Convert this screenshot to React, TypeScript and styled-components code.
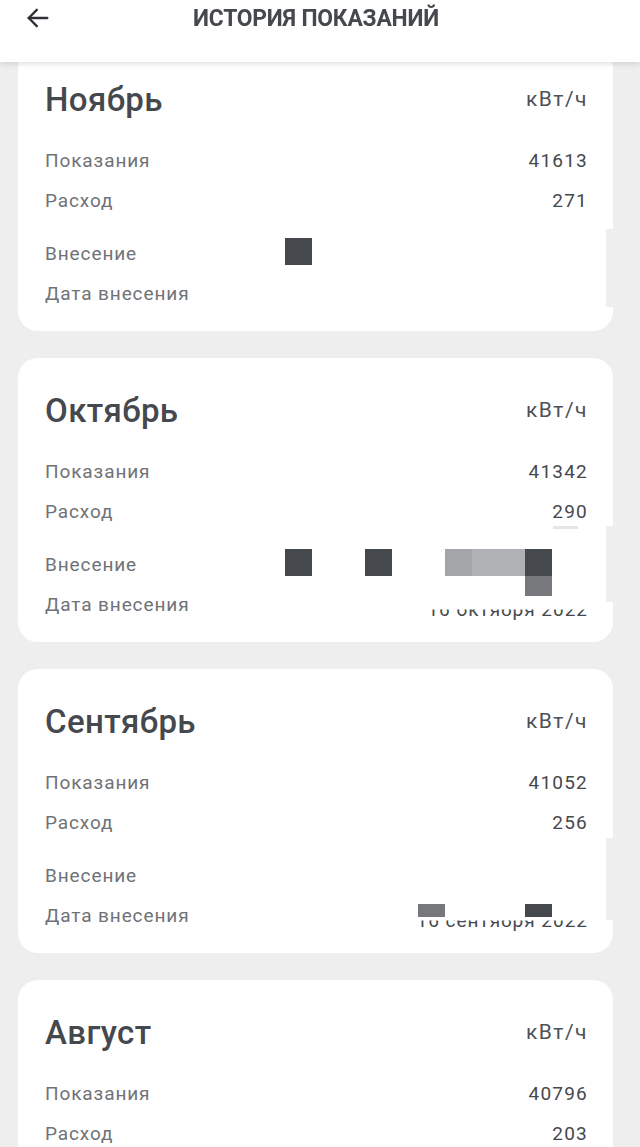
import React from "react";
import styled, { createGlobalStyle } from "styled-components";

const Global = createGlobalStyle`
  html, body { margin: 0; padding: 0; background: #eeeeee; }
  body { font-family: Roboto, "Noto Sans", sans-serif; -webkit-font-smoothing: antialiased; }
`;

const Header = styled.header`
  position: fixed;
  top: 0; left: 0; right: 0;
  height: 62px;
  background: #ffffff;
  box-shadow: 0 2px 5px rgba(0,0,0,0.12);
  z-index: 10;
`;

const HeaderInner = styled.div`
  display: grid;
  grid-template-columns: 60px 1fr 60px;
  align-items: start;
  height: 100%;
`;

const BackButton = styled.button`
  border: 0;
  background: transparent;
  padding: 0;
  margin: 4px 0 0 22px;
  width: 32px;
  height: 28px;
  display: flex;
  align-items: center;
  justify-content: center;
  color: #2e3035;
`;

const Title = styled.h1`
  margin: 3px 0 0;
  text-align: center;
  font-size: 24px;
  line-height: 30px;
  font-weight: 700;
  color: #45484d;
  letter-spacing: -0.2px;
  transform: translateX(-4px) scaleX(0.95);
`;

const List = styled.main`
  display: flex;
  flex-direction: column;
  gap: 27px;
  padding: 47px 27px 40px 18px;
`;

const Card = styled.section`
  position: relative;
  background: #ffffff;
  border-radius: 20px;
  padding: 24px 26px 18px 27px;
`;

const Notch = styled.span<{ $top: number; $h: number }>`
  position: absolute;
  right: 0;
  top: ${(p) => p.$top}px;
  width: 7px;
  height: ${(p) => p.$h}px;
  background: #eeeeee;
`;

const CardHead = styled.div`
  display: flex;
  justify-content: space-between;
  align-items: center;
  height: 56px;
  margin-bottom: 13px;
`;

const Month = styled.h2`
  margin: 0;
  font-size: 33px;
  font-weight: 500;
  color: #45484d;
  letter-spacing: 0.4px;
`;

const Unit = styled.span`
  font-size: 21px;
  color: #4e5156;
  letter-spacing: 1.5px;
  margin-right: -1px;
`;

const Group = styled.div<{ $gap?: number }>`
  display: flex;
  flex-direction: column;
  margin-top: ${(p) => p.$gap ?? 0}px;
`;

const Row = styled.div`
  position: relative;
  display: flex;
  justify-content: space-between;
  align-items: center;
  height: 40px;
  font-size: 19px;
  letter-spacing: 0.9px;
`;

const Label = styled.span`
  color: #6f7276;
`;

const Value = styled.span`
  color: #45484d;
  letter-spacing: 1.2px;
  margin-right: -1px;
`;

const ClippedValue = styled(Value)`
  clip-path: inset(52% 0 0 0);
  transform: translateY(5px);
  letter-spacing: 1px;
`;

const Pixel = styled.span<{ $x: number; $y: number; $w: number; $h: number; $c: string }>`
  position: absolute;
  left: ${(p) => p.$x}px;
  top: ${(p) => p.$y}px;
  width: ${(p) => p.$w}px;
  height: ${(p) => p.$h}px;
  background: ${(p) => p.$c};
`;

type Px = { x: number; y: number; w: number; h: number; c: string };

type Item = {
  month: string;
  reading: string;
  usage: string;
  date?: string;
  notch?: [number, number];
  pixels?: Px[];
  usagePixels?: Px[];
  datePixels?: Px[];
};

const items: Item[] = [
  {
    month: "Ноябрь",
    reading: "41613",
    usage: "271",
    notch: [182, 78],
    pixels: [{ x: 240, y: 5, w: 27, h: 27, c: "#45484d" }],
  },
  {
    month: "Октябрь",
    reading: "41342",
    usage: "290",
    date: "16 октября 2022",
    notch: [168, 76],
    usagePixels: [{ x: 508, y: 35, w: 25, h: 3, c: "#e4e5e7" }],
    pixels: [
      { x: 240, y: 5, w: 27, h: 27, c: "#45484d" },
      { x: 320, y: 5, w: 27, h: 27, c: "#45484d" },
      { x: 400, y: 5, w: 27, h: 27, c: "#a4a5a8" },
      { x: 427, y: 5, w: 53, h: 27, c: "#b0b1b4" },
      { x: 480, y: 5, w: 27, h: 27, c: "#45484d" },
      { x: 480, y: 32, w: 27, h: 20, c: "#76787c" },
    ],
  },
  {
    month: "Сентябрь",
    reading: "41052",
    usage: "256",
    date: "16 сентября 2022",
    notch: [169, 82],
    datePixels: [
      { x: 373, y: 9, w: 27, h: 13, c: "#76787c" },
      { x: 480, y: 9, w: 27, h: 13, c: "#45484d" },
    ],
  },
  {
    month: "Август",
    reading: "40796",
    usage: "203",
  },
];

function ArrowLeft() {
  return (
    <svg width="28" height="28" viewBox="0 0 24 24" fill="none" stroke="currentColor" strokeWidth="2" strokeLinecap="round" strokeLinejoin="round">
      <path d="M20 12H4" />
      <path d="M11 5l-7 7 7 7" />
    </svg>
  );
}

export default function App() {
  return (
    <>
      <Global />
      <Header>
        <HeaderInner>
          <BackButton aria-label="Назад">
            <ArrowLeft />
          </BackButton>
          <Title>ИСТОРИЯ ПОКАЗАНИЙ</Title>
          <span />
        </HeaderInner>
      </Header>
      <List>
        {items.map((it) => (
          <Card key={it.month}>
            {it.notch && <Notch $top={it.notch[0]} $h={it.notch[1]} />}
            <CardHead>
              <Month>{it.month}</Month>
              <Unit>кВт/ч</Unit>
            </CardHead>
            <Group>
              <Row>
                <Label>Показания</Label>
                <Value>{it.reading}</Value>
              </Row>
              <Row>
                <Label>Расход</Label>
                <Value>{it.usage}</Value>
                {it.usagePixels?.map((p, i) => (
                  <Pixel key={i} $x={p.x} $y={p.y} $w={p.w} $h={p.h} $c={p.c} />
                ))}
              </Row>
            </Group>
            <Group $gap={13}>
              <Row>
                <Label>Внесение</Label>
                {it.pixels?.map((p, i) => (
                  <Pixel key={i} $x={p.x} $y={p.y} $w={p.w} $h={p.h} $c={p.c} />
                ))}
              </Row>
              <Row>
                <Label>Дата внесения</Label>
                <ClippedValue>{it.date ?? ""}</ClippedValue>
                {it.datePixels?.map((p, i) => (
                  <Pixel key={i} $x={p.x} $y={p.y} $w={p.w} $h={p.h} $c={p.c} />
                ))}
              </Row>
            </Group>
          </Card>
        ))}
      </List>
    </>
  );
}
